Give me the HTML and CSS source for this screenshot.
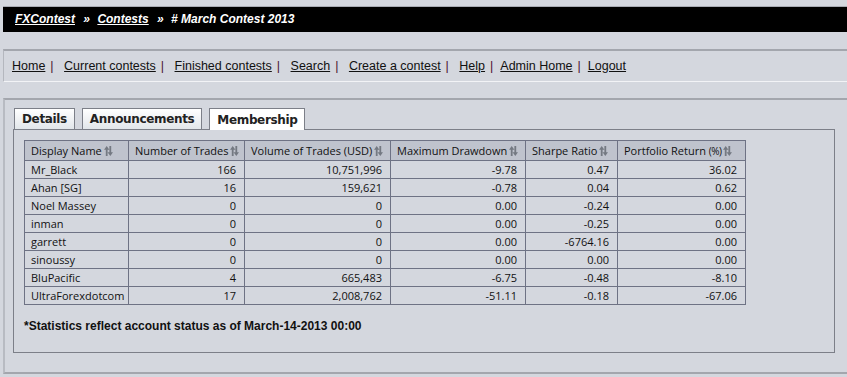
FILE: index.html
```html
<!DOCTYPE html>
<html>
<head>
    <link rel="stylesheet" href="styles.css">
</head>
<body>

    <div class="crumbs">
        <a href="#">FXContest</a> <span class="raquo">&raquo;</span> <a href="#">Contests</a> <span class="raquo">&raquo;</span> # March Contest 2013
    </div>

    <div class="nav">
        <a href="#">Home</a><span class="sep">|</span>
        <a href="#">Current contests</a><span class="sep">|</span>
        <a href="#">Finished contests</a><span class="sep">|</span>
        <a href="#">Search</a><span class="sep">|</span>
        <a href="#">Create a contest</a><span class="sep">|</span>
        <a href="#">Help</a><span class="sep">|</span><a href="#">Admin Home</a><span class="sep">|</span><a href="#">Logout</a>
    </div>

    <div class="panel">
        <div class="tabs">
            <div class="tab">Details</div>
            <div class="tab">Announcements</div>
            <div class="tab active">Membership</div>
        </div>
        <div class="tabbox">
            <table class="stats">
                <colgroup>
                    <col style="width:104px">
                    <col style="width:116px">
                    <col style="width:146px">
                    <col style="width:135px">
                    <col style="width:92px">
                    <col style="width:128px">
                </colgroup>
                <thead>
                    <tr>
                        <th>Display Name<svg class="sort" viewBox="0 0 10 11"><path d="M3 0 L0 4 H2 V11 H4 V4 H6 Z M7 11 L4 7 H6 V0 H8 V7 H10 Z"/></svg></th>
                        <th>Number of Trades<svg class="sort" viewBox="0 0 10 11"><path d="M3 0 L0 4 H2 V11 H4 V4 H6 Z M7 11 L4 7 H6 V0 H8 V7 H10 Z"/></svg></th>
                        <th>Volume of Trades (USD)<svg class="sort" viewBox="0 0 10 11"><path d="M3 0 L0 4 H2 V11 H4 V4 H6 Z M7 11 L4 7 H6 V0 H8 V7 H10 Z"/></svg></th>
                        <th>Maximum Drawdown<svg class="sort" viewBox="0 0 10 11"><path d="M3 0 L0 4 H2 V11 H4 V4 H6 Z M7 11 L4 7 H6 V0 H8 V7 H10 Z"/></svg></th>
                        <th>Sharpe Ratio<svg class="sort" viewBox="0 0 10 11"><path d="M3 0 L0 4 H2 V11 H4 V4 H6 Z M7 11 L4 7 H6 V0 H8 V7 H10 Z"/></svg></th>
                        <th>Portfolio Return <span class="pct">(%)</span><svg class="sort" viewBox="0 0 10 11"><path d="M3 0 L0 4 H2 V11 H4 V4 H6 Z M7 11 L4 7 H6 V0 H8 V7 H10 Z"/></svg></th>
                    </tr>
                </thead>
                <tbody>
                    <tr><td>Mr_Black</td><td>166</td><td>10,751,996</td><td>-9.78</td><td>0.47</td><td>36.02</td></tr>
                    <tr><td>Ahan [SG]</td><td>16</td><td>159,621</td><td>-0.78</td><td>0.04</td><td>0.62</td></tr>
                    <tr><td>Noel Massey</td><td>0</td><td>0</td><td>0.00</td><td>-0.24</td><td>0.00</td></tr>
                    <tr><td>inman</td><td>0</td><td>0</td><td>0.00</td><td>-0.25</td><td>0.00</td></tr>
                    <tr><td>garrett</td><td>0</td><td>0</td><td>0.00</td><td>-6764.16</td><td>0.00</td></tr>
                    <tr><td>sinoussy</td><td>0</td><td>0</td><td>0.00</td><td>0.00</td><td>0.00</td></tr>
                    <tr><td>BluPacific</td><td>4</td><td>665,483</td><td>-6.75</td><td>-0.48</td><td>-8.10</td></tr>
                    <tr><td>UltraForexdotcom</td><td>17</td><td>2,008,762</td><td>-51.11</td><td>-0.18</td><td>-67.06</td></tr>
                </tbody>
            </table>
            <p class="note">*Statistics reflect account status as of March-14-2013 00:00</p>
        </div>
    </div>

</body>
</html>
```

FILE: styles.css
```css
body {
    margin: 0;
    padding-top: 6px;
    background-color: #d4d7de;
    font-family: "Liberation Sans", Arial, sans-serif;
    color: #111;
}

.crumbs {
    margin-left: 3px;
    border-top: 1px solid #a8abb3;
    background-color: black;
    height: 25px;
    line-height: 25px;
    padding-left: 12px;
    color: white;
    font-size: 12px;
    font-weight: bold;
    font-style: italic;
}

.crumbs a {
    color: white;
}

.raquo {
    margin: 0 4px 0 5px;
}

.nav {
    margin-top: 17px;
    margin-left: 3px;
    border-top: 2px solid #a3a6ad;
    border-left: 1px solid #b4b7be;
    border-bottom: 1px solid #f2f3f6;
    height: 30px;
    line-height: 30px;
    padding-left: 8px;
    font-size: 12.5px;
}

.nav a {
    color: #111;
}

.sep {
    color: #4a1030;
    margin: 0 7px 0 5px;
}

.panel {
    margin-top: 16px;
    margin-left: 3px;
    border-top: 2px solid #a3a6ad;
    border-left: 2px solid #b8bbc2;
    border-bottom: 2px solid #a3a6ad;
    padding: 8px 10px 19px 8px;
}

.tabs {
    display: flex;
    gap: 7px;
    padding-left: 1px;
    height: 21px;
    align-items: flex-end;
}

.tab {
    border: 1px solid #7c7f88;
    border-bottom: none;
    background: linear-gradient(#ffffff, #e2e6ea);
    height: 20px;
    line-height: 20px;
    padding: 0 7px;
    font-family: "DejaVu Sans", Verdana, sans-serif;
    font-size: 12px;
    font-weight: bold;
    color: #222;
    letter-spacing: -0.35px;
}

.tab.active {
    background: #ffffff;
    height: 21px;
    line-height: 23px;
    position: relative;
    top: 1px;
}

.tabbox {
    width: 810px;
    height: 212px;
    border: 1px solid #7c7f88;
    padding: 10px 0 0 10px;
}

.stats {
    border-collapse: collapse;
    table-layout: fixed;
    width: 721px;
    font-family: "Open Sans", "Noto Sans", sans-serif;
    font-size: 11px;
    color: #111;
}

.stats th,
.stats td {
    border: 1px solid #6e7284;
    padding: 0 8px 0 6px;
    height: 17px;
    line-height: 16px;
    white-space: nowrap;
    overflow: hidden;
}

.stats th {
    background-color: #bfc3cd;
    font-weight: normal;
    text-align: left;
    height: 19px;
}

.stats td {
    text-align: right;
}

.stats td:first-child {
    text-align: left;
}

.pct {
    font-size: 10px;
    letter-spacing: -0.5px;
}

.sort {
    width: 9px;
    height: 10px;
    margin-left: 2px;
    vertical-align: -1px;
    fill: #747982;
}

.note {
    margin: 14px 0 0 0;
    font-size: 12px;
    font-weight: bold;
    color: #111;
}
```
